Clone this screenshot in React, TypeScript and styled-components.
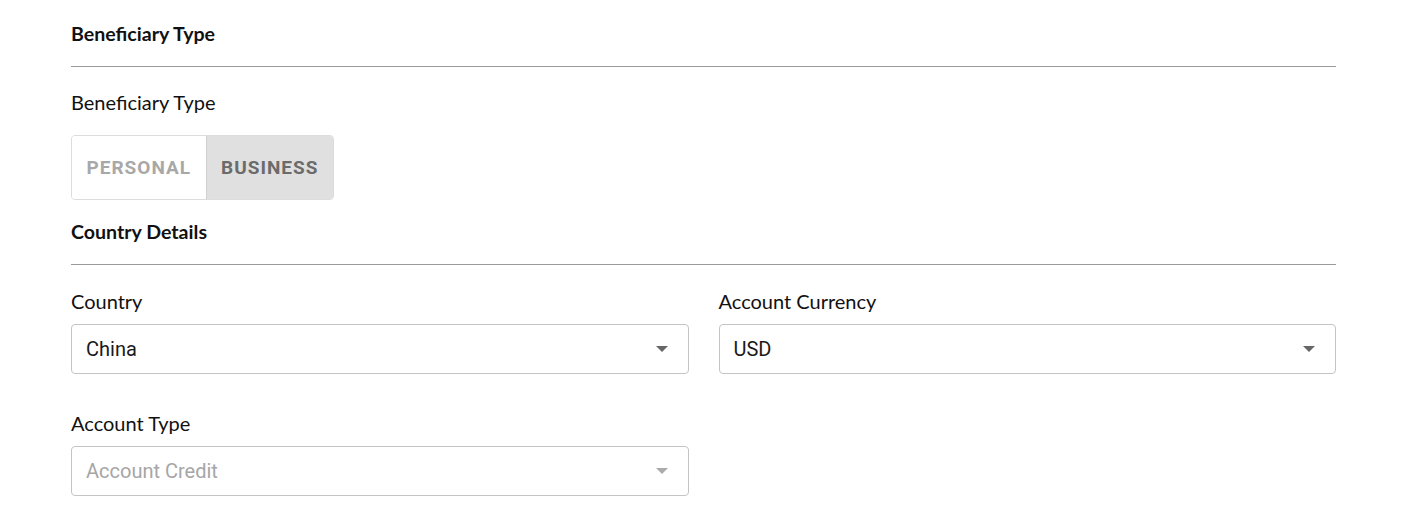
import React from "react";
import styled, { createGlobalStyle } from "styled-components";

const Global = createGlobalStyle`
  html, body { margin: 0; padding: 0; background: #fff; }
  body { font-family: Lato, "Open Sans", sans-serif; color: #111; }
  * { box-sizing: border-box; }
`;

const Page = styled.div`
  padding: 23px 71px 0 71px;
  display: flex;
  flex-direction: column;
`;

const SectionHeader = styled.h2<{ $top?: number }>`
  margin: ${(p) => p.$top ?? 0}px 0 0 0;
  padding-bottom: 21px;
  border-bottom: 1px solid #9a9a9a;
  font-family: Lato, sans-serif;
  font-weight: 700;
  font-size: 19.6px;
  line-height: 22px;
  color: #111;
`;

const Label = styled.div`
  font-family: Lato, sans-serif;
  font-size: 20px;
  line-height: 22px;
  color: #111;
  margin-bottom: 12px;
`;

const Field = styled.div<{ $top: number }>`
  margin-top: ${(p) => p.$top}px;
  display: flex;
  flex-direction: column;
`;

const Toggle = styled.div`
  display: inline-flex;
  align-self: flex-start;
  height: 65px;
  border: 1px solid #dcdcdc;
  border-radius: 4px;
  overflow: hidden;
  margin-top: 10px;
`;

const ToggleButton = styled.button<{ $active?: boolean }>`
  border: none;
  border-left: ${(p) => (p.$active ? "1px solid #d0d0d0" : "none")};
  background: ${(p) => (p.$active ? "#e0e0e0" : "#fff")};
  color: ${(p) => (p.$active ? "#6b6b6b" : "#a8a8a8")};
  font-family: Roboto, sans-serif;
  font-weight: 700;
  font-size: 19px;
  letter-spacing: 1px;
  padding: 0 14.5px;
  cursor: pointer;
`;

const Row = styled.div<{ $top: number }>`
  margin-top: ${(p) => p.$top}px;
  display: grid;
  grid-template-columns: 1fr 1fr;
  column-gap: 30px;
`;

const Select = styled.div<{ $disabled?: boolean }>`
  height: 50px;
  border: 1px solid #c4c4c4;
  border-radius: 4px;
  display: flex;
  align-items: center;
  justify-content: space-between;
  padding: 0 20px 0 14px;
  font-family: Roboto, sans-serif;
  font-size: 20px;
  color: ${(p) => (p.$disabled ? "#a6a6a6" : "#1a1a1a")};
`;

const Arrow = styled.span<{ $disabled?: boolean }>`
  width: 0;
  height: 0;
  border-left: 6px solid transparent;
  border-right: 6px solid transparent;
  border-top: 6px solid ${(p) => (p.$disabled ? "#ababab" : "#666")};
`;

const SelectBox = ({ value, disabled }: { value: string; disabled?: boolean }) => (
  <Select $disabled={disabled}>
    <span>{value}</span>
    <Arrow $disabled={disabled} />
  </Select>
);

export default function App() {
  return (
    <>
      <Global />
      <Page>
        <SectionHeader>Beneficiary Type</SectionHeader>
        <Field $top={24}>
          <Label>Beneficiary Type</Label>
          <Toggle>
            <ToggleButton>PERSONAL</ToggleButton>
            <ToggleButton $active>BUSINESS</ToggleButton>
          </Toggle>
        </Field>
        <SectionHeader $top={21}>Country Details</SectionHeader>
        <Row $top={25}>
          <Field $top={0}>
            <Label>Country</Label>
            <SelectBox value="China" />
          </Field>
          <Field $top={0}>
            <Label>Account Currency</Label>
            <SelectBox value="USD" />
          </Field>
        </Row>
        <Row $top={38}>
          <Field $top={0}>
            <Label>Account Type</Label>
            <SelectBox value="Account Credit" disabled />
          </Field>
        </Row>
      </Page>
    </>
  );
}
